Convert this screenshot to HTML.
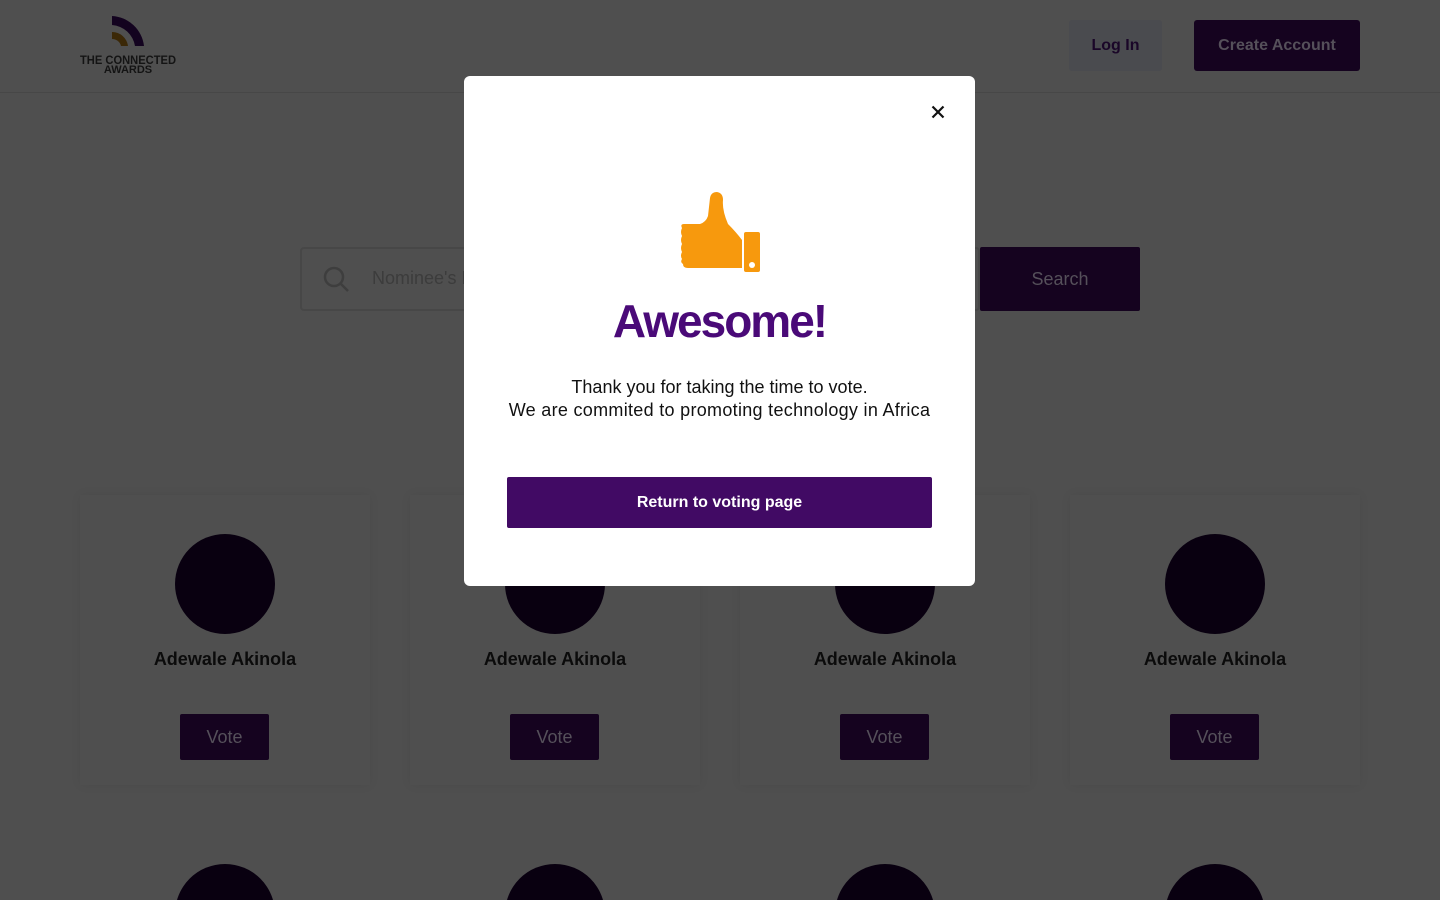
<!DOCTYPE html>
<html style="width:1440px;height:900px;overflow:hidden"><head><meta charset="utf-8"><style>
*{box-sizing:border-box;margin:0;padding:0}
body{width:1440px;height:900px;overflow:hidden;background:#4f4f4f;font-family:"Liberation Sans",sans-serif;position:relative}
.hdr{position:absolute;left:0;top:0;width:1440px;height:93px;border-bottom:1px solid #474747}
.login{position:absolute;left:1069px;top:20px;width:93px;height:51px;background:#4a4b4f;border-radius:3px;color:#1a0628;font-size:16px;font-weight:bold;line-height:51px;text-align:center}
.create{position:absolute;left:1194px;top:20px;width:166px;height:51px;background:#15031f;border-radius:3px;color:#55505a;font-size:16px;font-weight:bold;line-height:51px;text-align:center}
.search{position:absolute;left:300px;top:247px;width:680px;height:64px;border:2px solid #474747;border-radius:4px}
.sbtn{position:absolute;left:980px;top:247px;width:160px;height:64px;background:#15031f;border-radius:2px;color:#55505a;font-size:18px;line-height:64px;text-align:center}
.card{position:absolute;width:290px;height:290px;box-shadow:0 0 10px rgba(0,0,0,0.06);background:#4f4f4f;overflow:hidden}
.card.b{height:75px;box-shadow:none}
.av{position:absolute;left:95px;top:39px;width:100px;height:100px;border-radius:50%;background:#090010}
.nm{position:absolute;left:0;top:154px;width:290px;text-align:center;font-size:18px;font-weight:bold;color:#0b0b0b}
.vb{position:absolute;left:100px;top:219px;width:89px;height:46px;background:#15031f;border-radius:2px;color:#55505a;font-size:18px;line-height:46px;text-align:center}
.modal{position:absolute;left:464px;top:76px;width:511px;height:510px;background:#fff;border-radius:6px}
</style></head><body>
<div class="hdr">
<svg style="position:absolute;left:78px;top:14px" width="102" height="62" viewBox="0 0 102 62">
<path d="M34 2 A34 34 0 0 1 66 32 L57 32 A25 25 0 0 0 34 11 Z" fill="#13031f"/>
<path d="M34 18 A16 16 0 0 1 50 32 L43 32 A9 9 0 0 0 34 25 Z" fill="#3b2807"/>
<text x="50" y="50" text-anchor="middle" font-size="11.5" font-weight="bold" fill="#141414" font-family="Liberation Sans" textLength="96" lengthAdjust="spacingAndGlyphs">THE CONNECTED</text>
<text x="50" y="59" text-anchor="middle" font-size="11" font-weight="bold" fill="#141414" font-family="Liberation Sans">AWARDS</text>
</svg>
<div class="login">Log In</div><div class="create">Create Account</div>
</div>
<div class="search">
<svg style="position:absolute;left:20px;top:16px" width="30" height="30" viewBox="0 0 30 30"><circle cx="12" cy="12" r="9" fill="none" stroke="#3e3e3e" stroke-width="2.5"/><path d="M19 19 L26 26" stroke="#3e3e3e" stroke-width="2.5"/></svg>
<span style="position:absolute;left:70px;top:19px;font-size:18px;color:#3c3c3c">Nominee's Name</span>
</div>
<div class="sbtn">Search</div>
<div class="card" style="left:80px;top:495px"><div class="av"></div><div class="nm">Adewale Akinola</div><div class="vb">Vote</div></div>
<div class="card" style="left:410px;top:495px"><div class="av"></div><div class="nm">Adewale Akinola</div><div class="vb">Vote</div></div>
<div class="card" style="left:740px;top:495px"><div class="av"></div><div class="nm">Adewale Akinola</div><div class="vb">Vote</div></div>
<div class="card" style="left:1070px;top:495px"><div class="av"></div><div class="nm">Adewale Akinola</div><div class="vb">Vote</div></div>
<div class="card b" style="left:80px;top:825px"><div class="av"></div></div>
<div class="card b" style="left:410px;top:825px"><div class="av"></div></div>
<div class="card b" style="left:740px;top:825px"><div class="av"></div></div>
<div class="card b" style="left:1070px;top:825px"><div class="av"></div></div>
<div class="modal">
<svg style="position:absolute;left:467px;top:29px" width="14" height="14" viewBox="0 0 14 14"><path d="M1.5 1.5L12.5 12.5M12.5 1.5L1.5 12.5" stroke="#111" stroke-width="2.2"/></svg>
<svg style="position:absolute;left:216px;top:116px" width="82" height="80" viewBox="0 0 82 80">
<path d="M2 36 Q0 32 4 32 L20 32 Q26 30 28 24 L30 6 Q31 0 37 0 Q43 1 43 8 Q42 18 48 32 Q56 40 62 48 L62 76 L8 76 Q3 76 3 72 Q0 70 2 67 Q0 64 2 60 Q0 56 2 52 Q0 48 2 44 Q0 40 2 36 Z" fill="#f7990d"/>
<rect x="64" y="40" width="16" height="40" rx="2" fill="#f7990d"/>
<circle cx="72" cy="73" r="3" fill="#fff"/>
</svg>
<div style="position:absolute;left:0;top:218px;width:511px;text-align:center;font-size:46px;font-weight:bold;color:#4a0a78;letter-spacing:-2px">Awesome!</div>
<div style="position:absolute;left:0;top:300px;width:511px;text-align:center;font-size:18px;line-height:23px;color:#111">Thank you for taking the time to vote.<br><span style="letter-spacing:0.3px">We are commited to promoting technology in Africa</span></div>
<div style="position:absolute;left:43px;top:401px;width:425px;height:51px;background:#410a64;border-radius:2px;color:#fff;font-size:16px;font-weight:bold;line-height:51px;text-align:center">Return to voting page</div>
</div>
</body></html>
